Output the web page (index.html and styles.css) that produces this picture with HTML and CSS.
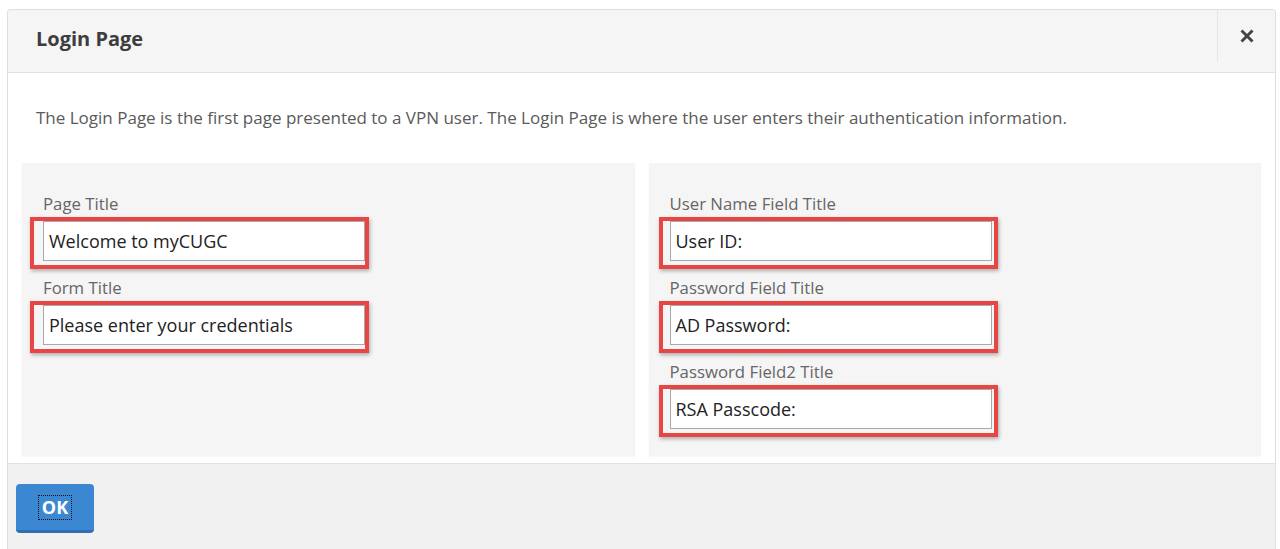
FILE: index.html
```html
<!DOCTYPE html>
<html lang="en">
<head>
<meta charset="utf-8">
<title>Login Page</title>
<link rel="stylesheet" href="styles.css">
</head>
<body>
<div class="dialog">
  <div class="header">
    <h1 class="title">Login Page</h1>
    <div class="close-wrap">
      <svg class="close" width="16" height="16" viewBox="0 0 16 16" aria-label="Close">
        <path d="M2.5 2.5 L13.5 13.5 M13.5 2.5 L2.5 13.5" stroke="#444" stroke-width="2.9" stroke-linecap="butt"/>
      </svg>
    </div>
  </div>
  <div class="body">
    <p class="desc">The Login Page is the first page presented to a VPN user. The Login Page is where the user enters their authentication information.</p>
    <div class="panels">
      <div class="panel">
        <div class="field">
          <div class="label">Page Title</div>
          <div class="mark"><div class="input">Welcome to myCUGC</div></div>
        </div>
        <div class="field">
          <div class="label">Form Title</div>
          <div class="mark"><div class="input">Please enter your credentials</div></div>
        </div>
      </div>
      <div class="panel panel-right">
        <div class="field">
          <div class="label">User Name Field Title</div>
          <div class="mark"><div class="input">User ID:</div></div>
        </div>
        <div class="field">
          <div class="label">Password Field Title</div>
          <div class="mark"><div class="input">AD Password:</div></div>
        </div>
        <div class="field">
          <div class="label">Password Field2 Title</div>
          <div class="mark"><div class="input">RSA Passcode:</div></div>
        </div>
      </div>
    </div>
  </div>
  <div class="footer">
    <button class="ok" type="button"><span class="ok-text">OK</span></button>
  </div>
</div>
</body>
</html>
```

FILE: styles.css
```css
html, body {
  margin: 0;
  padding: 0;
  background: #ffffff;
}
body {
  font-family: "Open Sans", "Liberation Sans", sans-serif;
  color: #555;
  padding: 9px 4px 0 7px;
  height: 549px;
  box-sizing: border-box;
  overflow: hidden;
}
.dialog {
  border: 1px solid #dedede;
  border-bottom: none;
  border-radius: 4px 4px 0 0;
  background: #fff;
  display: flex;
  flex-direction: column;
  height: 540px;
  box-sizing: border-box;
}
.header {
  flex-shrink: 0;
  display: flex;
  align-items: flex-start;
  justify-content: space-between;
  background: #f5f5f5;
  border-bottom: 1px solid #e2e2e2;
  border-radius: 4px 4px 0 0;
  height: 63px;
  box-sizing: border-box;
}
.title {
  margin: 0;
  padding: 15px 0 0 28px;
  font-size: 20px;
  font-weight: 700;
  color: #3d3d3d;
  line-height: 28px;
}
.close-wrap {
  width: 57px;
  height: 52px;
  border-left: 1px solid #e6e6e6;
  display: flex;
  align-items: center;
  justify-content: center;
}
.close {
  display: block;
}
.body {
  flex-shrink: 0;
  padding: 0 14px 0 14px;
  border-bottom: 1px solid #e2e2e2;
}
.desc {
  margin: 0;
  padding: 33px 0 0 14px;
  height: 90px;
  box-sizing: border-box;
  font-size: 17px;
  line-height: 24px;
  color: #5a5a5a;
  white-space: nowrap;
}
.panels {
  display: grid;
  grid-template-columns: 1fr 1fr;
  column-gap: 14px;
  padding-bottom: 7px;
}
.panel {
  background: #f5f5f5;
  padding: 31px 0 19px 21px;
  box-shadow: 0 1px 2px rgba(0,0,0,0.04);
}
.field {
  margin-bottom: 9px;
}
.field:last-child {
  margin-bottom: 0;
}
.label {
  font-size: 16.8px;
  line-height: 20px;
  color: #666;
  margin-bottom: 3px;
  white-space: nowrap;
}
.mark {
  width: 339px;
  height: 52px;
  margin-left: -13px;
  box-sizing: border-box;
  border: 4px solid #e84545;
  box-shadow: 1px 2px 4px rgba(0,0,0,0.3);
  padding: 0 0 0 9px;
}
.panel-right .mark {
  margin-left: -11px;
  padding-left: 7px;
}
.input {
  width: 322px;
  height: 40px;
  box-sizing: border-box;
  border: 1px solid #a8a8a8;
  background: #fff;
  padding: 0 5px;
  font-size: 18px;
  line-height: 38px;
  color: #222;
  white-space: nowrap;
}
.footer {
  flex: 1;
  background: #f1f1f1;
  padding: 20px 0 0 8px;
}
.ok {
  width: 78px;
  height: 49px;
  background: #3c87d2;
  border: none;
  border-bottom: 3px solid #2f6fb3;
  border-radius: 4px;
  display: flex;
  align-items: center;
  justify-content: center;
  padding: 0;
  cursor: pointer;
}
.ok-text {
  font-family: "Open Sans", "Liberation Sans", sans-serif;
  font-size: 18px;
  font-weight: 700;
  color: #fff;
  border: 1px dotted #111;
  padding: 0 3px;
  line-height: 23px;
}
```
